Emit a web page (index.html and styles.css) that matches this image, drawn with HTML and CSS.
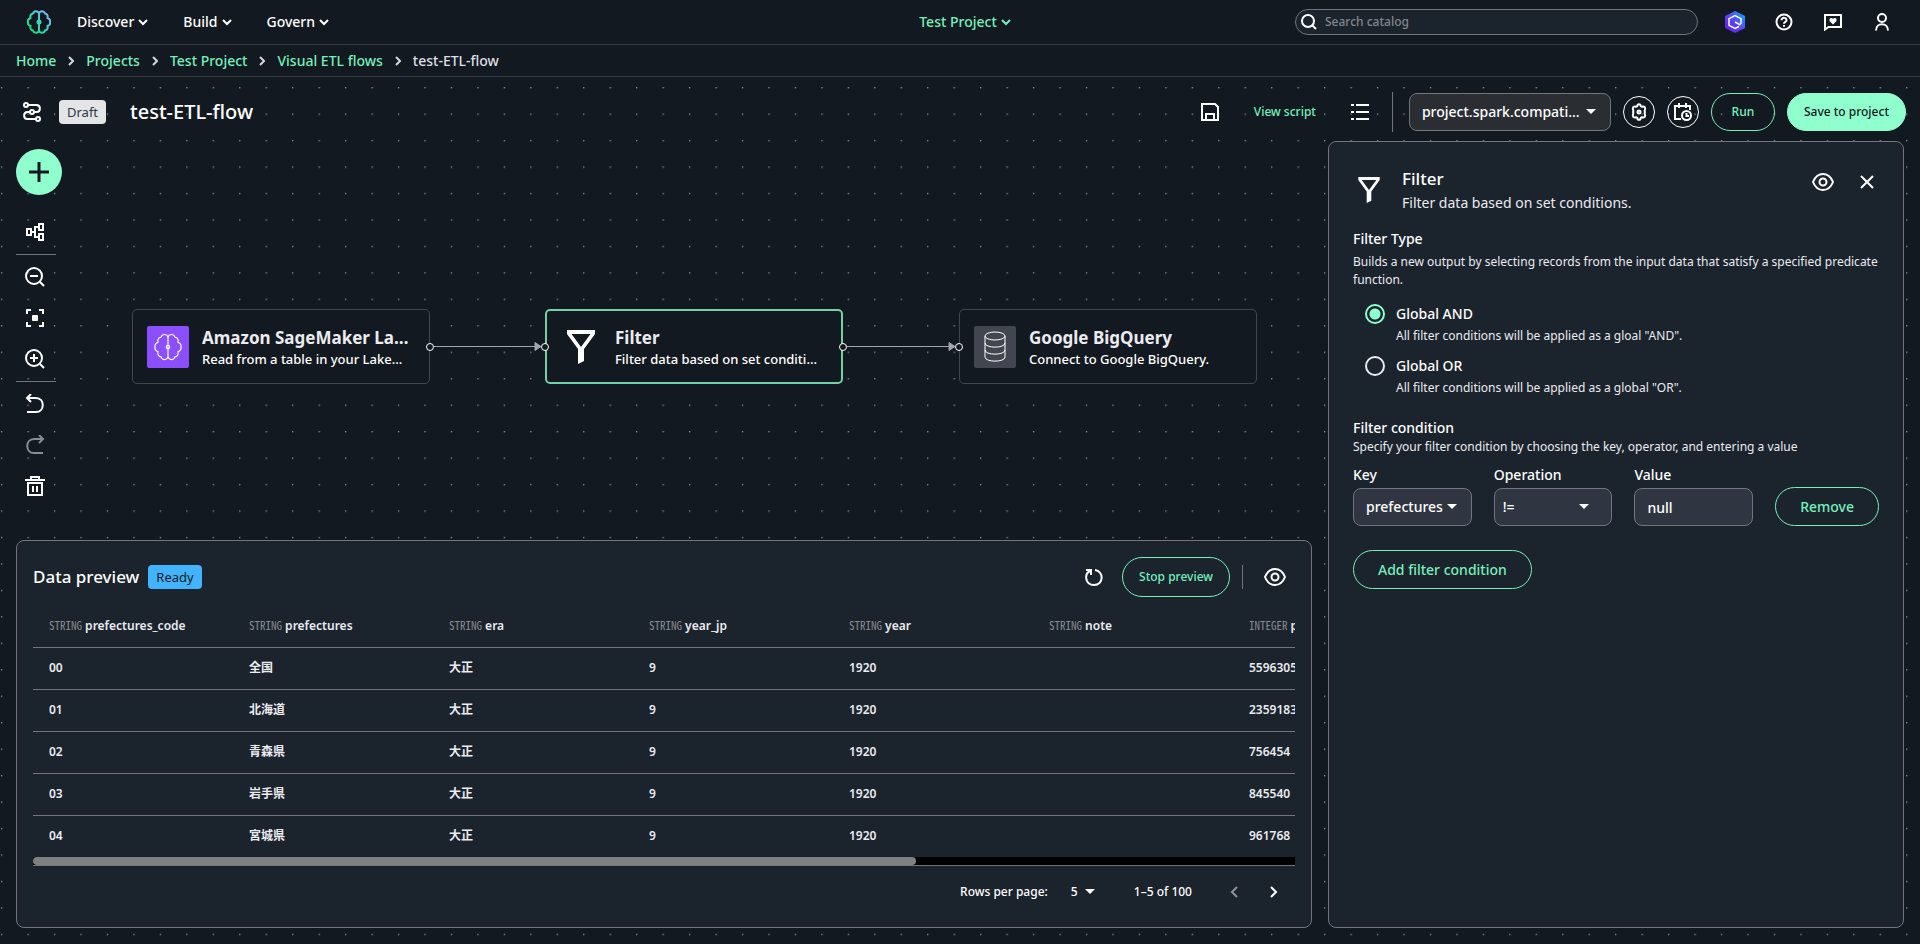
FILE: index.html
```html
<!DOCTYPE html>
<html lang="en">
<head>
  <meta charset="UTF-8" />
  <meta name="viewport" content="width=device-width, initial-scale=1.0"/>
  <title>test-ETL-flow</title>
  <link rel="stylesheet" href="styles.css">
</head>
<body>
  <!-- shared icons -->
  <svg class="sprite" aria-hidden="true">
    <symbol id="chevron-down" viewBox="0 0 10 10"><path d="M1 3l4 4 4-4"/></symbol>
    <symbol id="chevron-right" viewBox="0 0 6 10"><path d="M1 1l4 4-4 4"/></symbol>
    <symbol id="eye" viewBox="0 0 22 20"><path d="M11 2c5 0 8 3 10 8-2 5-5 8-10 8s-8-3-10-8C3 5 6 2 11 2z"/><circle cx="11" cy="10" r="3.500"/></symbol>
    <symbol id="funnel" viewBox="0 0 28 34"><path d="M0 0h28v4L17 19v12l-6 3V19L0 4z M4.500 4L14 17 23.500 4z" fill="#fff" stroke="none" fill-rule="evenodd"/></symbol>
    <symbol id="brain" viewBox="0 0 24 24">
      <path d="M12 3.500C11 .5 7 .5 6 3.500 3.500 4 3 6 3.500 8 1 9 .5 10.500 1 12c-.5 1.500 0 3 2.500 4-.5 2 0 4 2.500 4.500 1 3 5 3 6 0V3.500z"/>
      <path d="M12 3.500c1-3 5-3 6 0 2.500.5 3 2.500 2.500 4.500 2.500 1 3 2.500 2.500 4 .5 1.500 0 3-2.500 4 .5 2 0 4-2.500 4.500-1 3-5 3-6 0"/>
      <circle cx="12" cy="12" r="1.500"/>
    </symbol>
  </svg>

  <header class="header">
    <a class="logo" href="#" aria-label="Amazon SageMaker">
      <svg width="24" height="24">
        <defs>
          <linearGradient id="logoGradient" gradientUnits="userSpaceOnUse" x1="2" y1="22" x2="22" y2="2">
            <stop offset="0" stop-color="#0fe06e"/>
            <stop offset=".55" stop-color="#3fd6c4"/>
            <stop offset="1" stop-color="#8aa9ff"/>
          </linearGradient>
        </defs>
        <use href="#brain" stroke="url(#logoGradient)" stroke-width="2"/>
      </svg>
    </a>
    <nav class="main-nav">
      <button>Discover <svg width="10" height="10"><use href="#chevron-down"/></svg></button>
      <button>Build <svg width="10" height="10"><use href="#chevron-down"/></svg></button>
      <button>Govern <svg width="10" height="10"><use href="#chevron-down"/></svg></button>
    </nav>
    <button class="project-switch">Test Project <svg width="10" height="10"><use href="#chevron-down"/></svg></button>
    <div class="header-right">
      <label class="search">
        <svg width="16" height="16"><circle cx="7" cy="7" r="6"/><path d="M11 11l4 4"/></svg>
        <input type="text" placeholder="Search catalog" aria-label="Search catalog">
      </label>
      <button class="head-icon" aria-label="Amazon Q">
        <svg width="20" height="22">
          <defs>
            <linearGradient id="qGradient" x1="0" y1="1" x2="1" y2="0">
              <stop offset="0" stop-color="#6a12d8"/>
              <stop offset=".5" stop-color="#5a45ff"/>
              <stop offset="1" stop-color="#00b4ff"/>
            </linearGradient>
          </defs>
          <path d="M10 0l10 5v12l-10 5L0 17V5z" fill="url(#qGradient)" stroke="none"/>
          <path d="M14 15.500l-4 2-6-3.200V7.700l6-3.200 6 3.200V13M10 11l5.500 3" stroke-width="1.500"/>
        </svg>
      </button>
      <button class="head-icon" aria-label="Help">
        <svg width="18" height="18"><circle cx="9" cy="9" r="7.500"/><path d="M6.500 7.200c0-3.200 5-3 5 0 0 1.800-2.500 1.600-2.500 3.600M9 12v1.700"/></svg>
      </button>
      <button class="head-icon" aria-label="Feedback">
        <svg width="18" height="18"><path d="M1 16.500V2h16v12H4.500z"/><path d="M9 11.500L5.500 8V6l1.200-1H8l1 1 1-1h1.300l1.200 1v2z" fill="#fff" stroke="none"/></svg>
      </button>
      <button class="head-icon" aria-label="Account">
        <svg width="16" height="18"><circle cx="8" cy="5" r="4"/><path d="M2 17.500c0-8.500 12-8.500 12 0"/></svg>
      </button>
    </div>
  </header>

  <nav class="breadcrumb" aria-label="Breadcrumb">
    <a href="#">Home</a>
    <svg width="6" height="10"><use href="#chevron-right"/></svg>
    <a href="#">Projects</a>
    <svg width="6" height="10"><use href="#chevron-right"/></svg>
    <a href="#">Test Project</a>
    <svg width="6" height="10"><use href="#chevron-right"/></svg>
    <a href="#">Visual ETL flows</a>
    <svg width="6" height="10"><use href="#chevron-right"/></svg>
    <span>test-ETL-flow</span>
  </nav>

  <div class="workspace">
    <svg class="dots" aria-hidden="true">
      <pattern id="dotPattern" x="1" y="10" width="26.460" height="26.460" patternUnits="userSpaceOnUse">
        <circle cx=".7" cy=".7" r=".7" fill="#a4a5ae"/>
      </pattern>
      <rect width="100%" height="100%" fill="url(#dotPattern)"/>
    </svg>

    <div class="toolbar">
      <svg class="flow-icon" width="20" height="20"><circle cx="4" cy="3" r="2"/><circle cx="16" cy="17" r="2"/><circle cx="10" cy="10" r="2"/><path d="M6 3h8.500c4.500 0 4.500 7 0 7H12M8 10H5.500c-4.500 0-4.500 7 0 7H14"/></svg>
      <span class="badge">Draft</span>
      <h1>test-ETL-flow</h1>
      <div class="toolbar-right">
        <button class="icon-btn" aria-label="Save">
          <svg width="18" height="18"><path d="M1 1h13l3 3v13H1zM5 17v-6h8v6"/></svg>
        </button>
        <a class="view-script" href="#">View script</a>
        <button class="icon-btn" aria-label="List">
          <svg width="18" height="18"><path d="M5 2h13M5 9h13M5 16h13M0 2h3M0 9h3M0 16h3"/></svg>
        </button>
        <span class="divider"></span>
        <div class="select-box compute">
          <select aria-label="Compute"><option>project.spark.compatibility</option></select>
          <svg width="10" height="6"><path d="M0 0h10L5 5z"/></svg>
        </div>
        <button class="round-btn" aria-label="Settings">
          <svg width="18" height="18"><path d="M7.200 3.200Q7.500 1.200 9 1.200t1.800 2q.5.400 1.200.5 1.800-.6 2.700.5t.2 2.600q-.6.900 0 2.200v0q-.6 1.300 0 2.200.7 1.500-.2 2.600t-2.700.5q-.7.100-1.200.5-.3 2-1.800 2t-1.800-2q-.5-.4-1.200-.5-1.800.6-2.700-.5t-.2-2.600q.6-.9 0-2.200.6-1.300 0-2.200-.7-1.500.2-2.600t2.700-.5q.7-.1 1.200-.5z"/><circle cx="9" cy="9" r="1.500"/></svg>
        </button>
        <button class="round-btn" aria-label="Schedule">
          <svg width="18" height="18"><path d="M7 16H1V3h15v4M5 0v5M12 0v5"/><circle cx="12.500" cy="12.500" r="4.500"/><path d="M12.500 10v3H15"/></svg>
        </button>
        <button class="btn btn-small">Run</button>
        <button class="btn btn-small btn-primary">Save to project</button>
      </div>
    </div>

    <div class="main">
      <div class="left">
        <div class="canvas">
          <div class="tools">
            <button class="add-btn" aria-label="Add node"><svg width="22" height="22"><path d="M11 1v20M1 11h20"/></svg></button>
            <button class="tool" aria-label="Layout"><svg width="20" height="20"><path d="M2 7h4v6H2zM14 2h4v6h-4zM14 12h4v6h-4zM6 10h4M14 5h-4v10h4"/></svg></button>
            <hr>
            <button class="tool" aria-label="Zoom out"><svg width="20" height="20"><circle cx="9" cy="9" r="8"/><path d="M15 15l4 4M5 9h8"/></svg></button>
            <button class="tool" aria-label="Fit view"><svg width="20" height="20"><path d="M2 6V2h4M14 2h4v4M18 14v4h-4M6 18H2v-4"/><rect x="7" y="7" width="6" height="6" rx="1" fill="#fff" stroke="none"/></svg></button>
            <button class="tool" aria-label="Zoom in"><svg width="20" height="20"><circle cx="9" cy="9" r="8"/><path d="M15 15l4 4M5 9h8M9 5v8"/></svg></button>
            <hr>
            <button class="tool" aria-label="Undo"><svg width="20" height="20"><path d="M6 0L2 4l4 4M2 4h9c9 0 9 14 0 14H2"/></svg></button>
            <button class="tool" aria-label="Redo" disabled><svg width="20" height="20"><path d="M14 0l4 4-4 4M18 4H9C0 4 0 18 9 18h9"/></svg></button>
            <button class="tool" aria-label="Delete"><svg width="20" height="20"><path d="M0 4h20M6 4V1h8v3M3 7h14v12H3zM8 10v6M12 10v6"/></svg></button>
          </div>

          <svg class="edges" aria-hidden="true">
            <path d="M414 205.500h108M828 205.500h108"/>
            <path class="arrow" d="M519 201.500l6 4-6 4zM933 201.500l6 4-6 4z"/>
          </svg>
          <div class="node node-source">
            <svg class="node-icon purple" width="42" height="42" viewBox="0 0 42 42"><use href="#brain" x="7" y="7" width="28" height="28"/></svg>
            <div class="node-text"><h2>Amazon SageMaker Lakehouse</h2><p>Read from a table in your Lakehouse.</p></div>
            <i class="handle right"></i>
          </div>
          <div class="node node-filter selected">
            <svg class="node-icon" width="42" height="42" viewBox="0 0 42 42"><use href="#funnel" x="6" y="4" width="30" height="34"/></svg>
            <div class="node-text"><h2>Filter</h2><p>Filter data based on set conditions.</p></div>
            <i class="handle left"></i><i class="handle right"></i>
          </div>
          <div class="node node-target">
            <svg class="node-icon grey" width="42" height="42" viewBox="0 0 42 42"><ellipse cx="21" cy="10" rx="10" ry="4"/><path d="M11 10v21c0 5.500 20 5.500 20 0V10M11 17c0 5.500 20 5.500 20 0M11 24c0 5.500 20 5.500 20 0"/></svg>
            <div class="node-text"><h2>Google BigQuery</h2><p>Connect to Google BigQuery.</p></div>
            <i class="handle left"></i>
          </div>
        </div>

        <section class="card preview">
          <div class="preview-head">
            <h2>Data preview</h2>
            <span class="badge ready">Ready</span>
            <div class="preview-actions">
              <button class="icon-btn refresh" aria-label="Refresh"><svg width="18" height="18"><path d="M10 2c9 1 9 15-1 15C0 17-1 6 5 3M1 2h5v5"/></svg></button>
              <button class="btn btn-small btn-tall">Stop preview</button>
              <span class="divider"></span>
              <button class="icon-btn hide-preview" aria-label="Hide preview"><svg width="22" height="20"><use href="#eye"/></svg></button>
            </div>
          </div>
          <div class="table-wrap">
            <table>
              <thead>
                <tr>
                  <th><span>STRING</span> prefectures_code</th>
                  <th><span>STRING</span> prefectures</th>
                  <th><span>STRING</span> era</th>
                  <th><span>STRING</span> year_jp</th>
                  <th><span>STRING</span> year</th>
                  <th><span>STRING</span> note</th>
                  <th><span>INTEGER</span> population</th>
                  <th></th>
                  <th></th>
                </tr>
              </thead>
              <tbody>
                <tr><td>00</td><td>全国</td><td>大正</td><td>9</td><td>1920</td><td></td><td>55963053</td><td></td><td></td></tr>
                <tr><td>01</td><td>北海道</td><td>大正</td><td>9</td><td>1920</td><td></td><td>2359183</td><td></td><td></td></tr>
                <tr><td>02</td><td>青森県</td><td>大正</td><td>9</td><td>1920</td><td></td><td>756454</td><td></td><td></td></tr>
                <tr><td>03</td><td>岩手県</td><td>大正</td><td>9</td><td>1920</td><td></td><td>845540</td><td></td><td></td></tr>
                <tr><td>04</td><td>宮城県</td><td>大正</td><td>9</td><td>1920</td><td></td><td>961768</td><td></td><td></td></tr>
              </tbody>
            </table>
          </div>
          <div class="scrollbar"><div class="thumb"></div></div>
          <div class="pagination">
            <label for="rows">Rows per page:</label>
            <div class="rows-select">
              <select id="rows"><option>5</option></select>
              <svg width="10" height="6"><path d="M0 0h10L5 5z"/></svg>
            </div>
            <span class="range">1–5 of 100</span>
            <button class="page-btn" aria-label="Previous page" disabled><svg width="8" height="12"><path d="M7 1L2 6l5 5"/></svg></button>
            <button class="page-btn" aria-label="Next page"><svg width="8" height="12"><path d="M1 1l5 5-5 5"/></svg></button>
          </div>
        </section>
      </div>

      <aside class="card panel">
        <div class="panel-head">
          <svg class="panel-icon" width="26" height="26"><use href="#funnel"/></svg>
          <div class="panel-title">
            <h2>Filter</h2>
            <p>Filter data based on set conditions.</p>
          </div>
          <button class="icon-btn" aria-label="Preview"><svg width="22" height="20"><use href="#eye"/></svg></button>
          <button class="icon-btn" aria-label="Close"><svg width="14" height="14"><path d="M1 1l12 12M13 1L1 13"/></svg></button>
        </div>

        <h3>Filter Type</h3>
        <p class="hint">Builds a new output by selecting records from the input data that satisfy a specified predicate function.</p>
        <div class="radios">
          <input type="radio" name="type" id="and" checked>
          <div><label for="and">Global AND</label><p>All filter conditions will be applied as a gloal "AND".</p></div>
          <input type="radio" name="type" id="or">
          <div><label for="or">Global OR</label><p>All filter conditions will be applied as a global "OR".</p></div>
        </div>

        <h3>Filter condition</h3>
        <p class="hint tight">Specify your filter condition by choosing the key, operator, and entering a value</p>
        <div class="condition">
          <div class="field">
            <label for="key">Key</label>
            <div class="select-box">
              <select id="key"><option>prefectures</option></select>
              <svg width="10" height="6"><path d="M0 0h10L5 5z"/></svg>
            </div>
          </div>
          <div class="field">
            <label for="operation">Operation</label>
            <div class="select-box operation">
              <select id="operation"><option>!=</option></select>
              <svg width="10" height="6"><path d="M0 0h10L5 5z"/></svg>
            </div>
          </div>
          <div class="field">
            <label for="value">Value</label>
            <input class="value-input" type="text" id="value" value="null">
          </div>
          <button class="btn">Remove</button>
        </div>
        <button class="btn add-condition">Add filter condition</button>
      </aside>
    </div>
  </div>
</body>
</html>
```
FILE: styles.css
```css
* {
  box-sizing: border-box;
}
body {
  margin: 0;
  min-height: 100vh;
  display: flex;
  flex-direction: column;
  background-color: #131920;
  color: #fff;
  font-family: "Noto Sans", "Noto Sans CJK JP", sans-serif;
  font-size: 14px;
  font-weight: 500;
  line-height: 20px;
}
h1, h2, h3, p {
  margin: 0;
  font-weight: 500;
}
button, input, select {
  font: inherit;
  color: inherit;
  margin: 0;
}
button {
  background: none;
  border: none;
  padding: 0;
  cursor: pointer;
}
a {
  color: #75f0bb;
  text-decoration: none;
}
svg {
  display: block;
  flex: none;
  fill: none;
  stroke: #fff;
  stroke-width: 2;
}
.sprite {
  position: absolute;
  width: 0;
  height: 0;
}

/* header */
.header {
  height: 45px;
  display: grid;
  grid-template-columns: 1fr auto 1fr;
  align-items: center;
  padding: 0 26px 0 36px;
  border-bottom: 1px solid #333842;
  position: relative;
}
.logo {
  position: absolute;
  left: 27px;
  top: 10px;
}
.main-nav {
  display: flex;
  gap: 35px;
  padding-left: 41px;
}
.main-nav button, .project-switch {
  display: flex;
  align-items: center;
  gap: 4px;
}
.project-switch {
  color: #75f0bb;
}
.project-switch svg {
  stroke: #75f0bb;
}
.header-right {
  display: flex;
  align-items: center;
  justify-content: flex-end;
  gap: 25px;
}
.search {
  display: flex;
  align-items: center;
  gap: 8px;
  width: 403px;
  height: 26px;
  padding: 0 5px;
  border: 1px solid #72747e;
  border-radius: 13px;
  background-color: #1b232d;
}
.search input {
  flex: 1;
  min-width: 0;
  padding: 0;
  border: none;
  outline: none;
  background: none;
  font-size: 12px;
}
.search input::placeholder {
  color: #83868f;
}
.head-icon {
  width: 24px;
  height: 24px;
  display: grid;
  place-items: center;
}

/* breadcrumb */
.breadcrumb {
  height: 32px;
  display: flex;
  align-items: center;
  gap: 12px;
  padding: 0 16px;
  border-bottom: 1px solid #333842;
}
.breadcrumb svg {
  stroke: #d5d7dc;
}
.breadcrumb span {
  color: #dedee3;
}

/* workspace */
.workspace {
  flex: 1;
  display: flex;
  flex-direction: column;
  position: relative;
}
.dots {
  position: absolute;
  width: 100%;
  height: 100%;
  stroke: none;
}
.toolbar {
  position: relative;
  height: 64px;
  display: flex;
  align-items: center;
  padding: 6px 14px 0 22px;
}
.badge {
  padding: 2px 8px;
  border-radius: 4px;
  background-color: #e2e4e6;
  color: #333843;
  font-size: 13px;
  font-weight: 400;
}
.toolbar .badge {
  margin: 0 24px 0 17px;
}
h1 {
  font-size: 20px;
}
.toolbar-right {
  margin-left: auto;
  display: flex;
  align-items: center;
  gap: 12px;
}
.icon-btn {
  width: 24px;
  height: 24px;
  display: grid;
  place-items: center;
}
.view-script {
  margin: 0 20px;
  font-size: 12px;
}
.divider {
  width: 1px;
  background-color: #72747e;
}
.toolbar .divider {
  height: 40px;
  margin: 0 4px 0 8px;
}
.select-box {
  display: flex;
  align-items: center;
  height: 38px;
  padding: 0 14px 0 12px;
  border: 1px solid #72747e;
  border-radius: 8px;
  background-color: #303641;
}
.compute {
  width: 202px;
  background-color: #2a2e33;
}
select {
  flex: 1;
  min-width: 0;
  padding: 0;
  border: none;
  outline: none;
  background: none;
  appearance: none;
  text-overflow: ellipsis;
}
.select-box svg, .rows-select svg {
  fill: #fff;
  stroke: none;
  pointer-events: none;
}
.round-btn {
  width: 32px;
  height: 32px;
  display: grid;
  place-items: center;
  border: 1px solid #fff;
  border-radius: 50%;
}
.btn {
  height: 39px;
  padding: 0 24px;
  border: 1px solid #75f0bb;
  border-radius: 20px;
  color: #75f0bb;
  white-space: nowrap;
}
.btn-small {
  height: 38px;
  padding: 0 16px;
  min-width: 64px;
  font-size: 12px;
}
.btn-tall {
  height: 40px;
}
.btn-primary {
  background-color: #8fffce;
  border-color: #8fffce;
  color: #131920;
}
.main {
  position: relative;
  flex: 1;
  display: grid;
  grid-template-columns: minmax(0, 9fr) minmax(0, 4fr);
  gap: 16px;
  padding: 0 16px 16px;
}
.left {
  display: flex;
  flex-direction: column;
}

/* canvas */
.canvas {
  flex: 1;
  position: relative;
}
.tools {
  width: 46px;
  padding-top: 8px;
}
.add-btn {
  width: 46px;
  height: 46px;
  margin-bottom: 17px;
  display: grid;
  place-items: center;
  border-radius: 50%;
  background-color: #8fffce;
}
.add-btn svg {
  stroke: #131920;
  stroke-width: 3;
}
.tool {
  display: block;
  padding: 10px 9px 11px;
}
.tool:disabled svg {
  opacity: .5;
}
hr {
  width: 40px;
  margin: 1px 0 2px;
  border: none;
  border-top: 1px solid #72747e;
}
.edges {
  position: absolute;
  left: 0;
  top: 0;
  width: 100%;
  height: 100%;
  pointer-events: none;
  stroke: #a4a4ad;
  stroke-width: 1;
}
.edges .arrow {
  fill: #a4a4ad;
}
.node {
  position: absolute;
  top: 168px;
  width: 298px;
  height: 75px;
  display: flex;
  align-items: center;
  gap: 13px;
  padding: 0 20px 0 14px;
  border: 1px solid #424650;
  border-radius: 5px;
  background-color: #131920;
}
.node-source {
  left: 116px;
}
.node-filter {
  left: 529px;
}
.node-target {
  left: 943px;
}
.selected {
  border: 2px solid #75cfa8;
  padding: 0 19px 0 13px;
}
.node-icon {
  border-radius: 2px;
  stroke-width: 1;
}
.purple {
  background-color: #8c4fff;
}
.grey {
  background-color: #424650;
}
.node-text {
  min-width: 0;
  padding-top: 2px;
}
.node h2, .node p {
  overflow: hidden;
  text-overflow: ellipsis;
  white-space: nowrap;
}
.node h2 {
  color: #ebebf0;
  font-size: 17px;
  font-weight: 700;
  line-height: 23px;
}
.node p {
  font-size: 13px;
}
.handle {
  position: absolute;
  top: 50%;
  width: 8px;
  height: 8px;
  margin-top: -4px;
  border: 1px solid #fff;
  border-radius: 50%;
  background-color: #131920;
}
.handle.left {
  left: -5px;
}
.handle.right {
  right: -5px;
}
.selected .handle.left {
  left: -6px;
}
.selected .handle.right {
  right: -6px;
}

/* data preview */
.card {
  border: 1px solid #72747e;
  border-radius: 8px;
  background-color: #1b232d;
}
.preview {
  padding: 16px;
}
.preview-head {
  display: flex;
  align-items: center;
}
.preview h2, .panel h2 {
  font-size: 17px;
}
.ready {
  margin-left: 9px;
  background-color: #42b4ff;
  color: #131920;
}
.preview-actions {
  margin-left: auto;
  display: flex;
  align-items: center;
  gap: 12px;
}
.refresh {
  margin-right: 4px;
}
.hide-preview {
  margin: 0 8px;
}
.preview .divider {
  height: 24px;
}
.table-wrap {
  margin-top: 8px;
  overflow-x: auto;
  scrollbar-width: none;
}
.scrollbar {
  height: 9px;
  background-color: #000;
  border-bottom: 1px solid #72747e;
}
.thumb {
  width: 70%;
  height: 8px;
  border-radius: 4px;
  background-color: #808080;
}
table {
  width: 1800px;
  table-layout: fixed;
  border-collapse: collapse;
}
th, td {
  height: 42px;
  padding: 0 16px;
  border-bottom: 1px solid #72747e;
  color: #ebebf0;
  font-size: 12px;
  font-weight: 600;
  text-align: left;
  white-space: nowrap;
}
tbody tr:last-child td {
  border: none;
}
th span {
  color: #8c8c94;
  font-family: "Noto Sans Mono CJK JP", "Liberation Mono", monospace;
  font-size: 11px;
  font-weight: 400;
}
.pagination {
  display: flex;
  align-items: center;
  justify-content: flex-end;
  padding: 16px 11px 9px 0;
  font-size: 12px;
}
.rows-select {
  display: flex;
  align-items: center;
  width: 24px;
  margin: 0 39px 0 23px;
}
.range {
  margin-right: 32px;
}
.page-btn {
  width: 20px;
  height: 20px;
  display: grid;
  place-items: center;
  margin-left: 20px;
}
.range + .page-btn {
  margin-left: 0;
}
.page-btn:disabled {
  opacity: .5;
}

/* filter panel */
.panel {
  padding: 27px 24px;
}
.panel-head {
  display: flex;
  gap: 20px;
  margin-bottom: 16px;
}
.panel-icon {
  margin: 8px 0 0 3px;
}
.panel-title {
  flex: 1;
}
.panel-title p {
  margin-top: 4px;
  color: #ebebf0;
  font-weight: 400;
}
.panel-head .icon-btn {
  margin-top: 1px;
}
h3 {
  font-size: 14px;
}
.hint {
  margin-top: 4px;
  color: #ebebf0;
  font-size: 12px;
  font-weight: 400;
  line-height: 18px;
}
.tight {
  margin-top: 0;
}
.radios {
  display: grid;
  grid-template-columns: 20px 1fr;
  gap: 10px 11px;
  padding: 15px 0 20px 12px;
}
.radios input {
  width: 20px;
  height: 20px;
  appearance: none;
  border: 2px solid #ebebf0;
  border-radius: 50%;
}
.radios input:checked {
  border-color: #8fffce;
  background: radial-gradient(circle, #8fffce 5px, transparent 6px);
}
.radios p {
  margin-top: 2px;
  color: #ebebf0;
  font-size: 12px;
  font-weight: 400;
}
.condition {
  display: flex;
  align-items: flex-end;
  gap: 22px;
  margin-top: 9px;
}
.field {
  flex: 1;
  min-width: 0;
}
.field label {
  display: block;
  margin-bottom: 3px;
}
.operation {
  padding: 0 22px 0 8px;
}
.value-input {
  display: block;
  width: 100%;
  height: 38px;
  padding: 0 12px;
  border: 1px solid #72747e;
  border-radius: 8px;
  outline: none;
  background-color: #303641;
}
.add-condition {
  margin-top: 24px;
}
```
